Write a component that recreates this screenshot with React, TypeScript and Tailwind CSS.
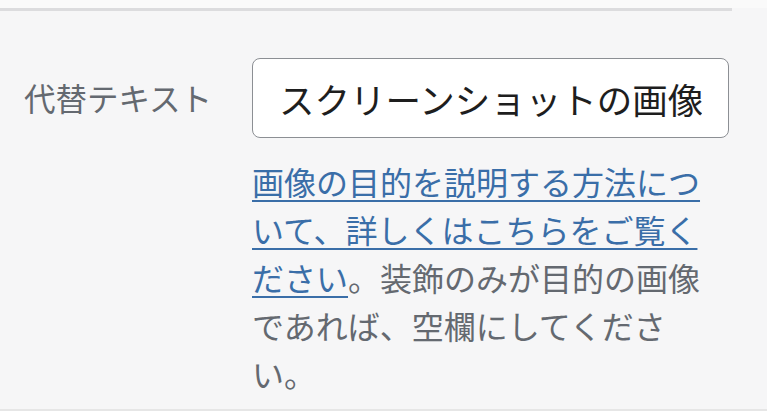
export default function App() {
  return (
    <div className="w-[767px] h-[411px] overflow-hidden bg-[#f6f6f7] flex flex-col font-['Noto_Sans_CJK_JP','Noto_Sans',sans-serif]">
      <div className="h-2 bg-[#fafafa]" />
      <div className="w-[732px] h-[3px] bg-[#dcdcde]" />

      <div className="flex items-start pt-[47px]">
        <div className="w-[252px] h-[80px] pl-6 flex items-center">
          <span className="text-[31.5px] text-[#646970] leading-none">代替テキスト</span>
        </div>

        <div className="w-[477px] flex flex-col">
          <input
            readOnly
            value="スクリーンショットの画像"
            className="h-[80px] w-full rounded-lg border-[1.5px] border-[#8c8f94] bg-white px-[26px] text-[35.5px] text-[#1e1e1e] outline-none"
          />
          <p className="mt-[19px] text-[32px] leading-[48px] text-[#646970]">
            <a
              href="#"
              className="text-[#3a6ea8] underline decoration-2 underline-offset-[5px]"
            >
              画像の目的を説明する方法について、詳しくはこちらをご覧ください
            </a>
            。装飾のみが目的の画像であれば、空欄にしてください。
          </p>
        </div>
      </div>

      <div className="mt-auto h-[2px] bg-[#e6e6e6]" />
    </div>
  )
}
